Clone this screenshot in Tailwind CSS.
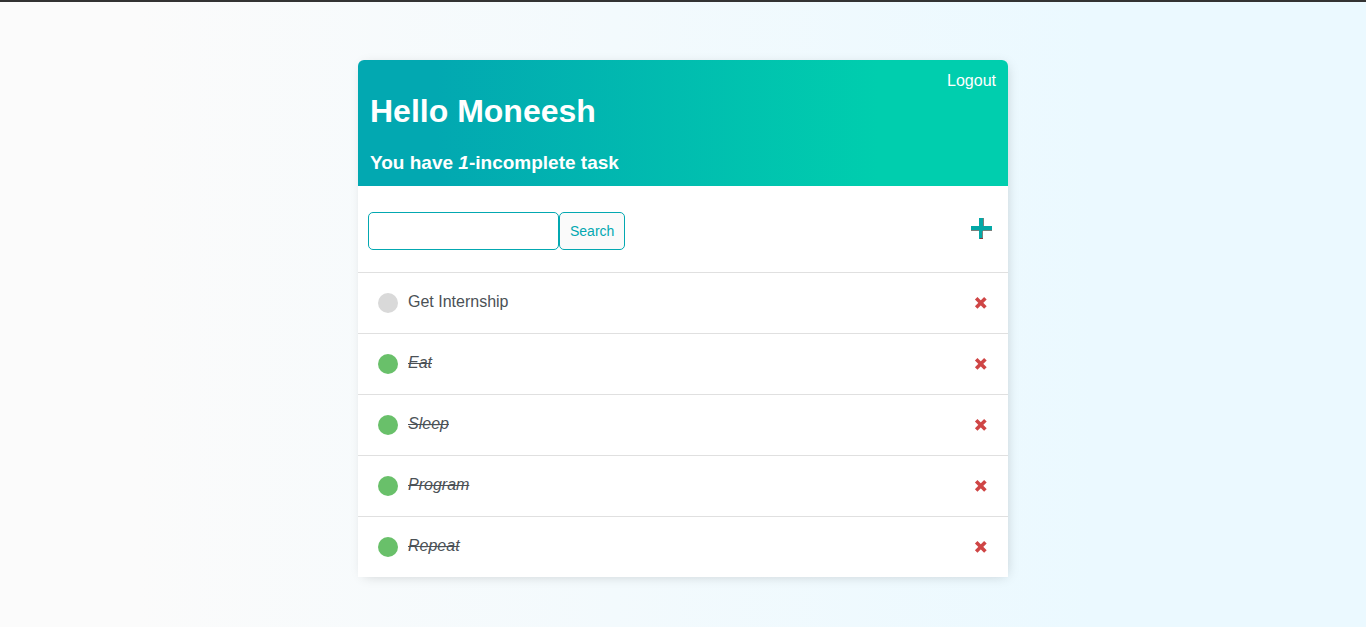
<!DOCTYPE html>
<html lang="en">
<head>
<meta charset="utf-8">
<meta name="viewport" content="width=device-width, initial-scale=1">
<title>My To Do List</title>
<script src="https://cdn.jsdelivr.net/npm/@tailwindcss/browser@4"></script>
</head>
<body class="min-h-screen border-t-2 border-[#333333] bg-[linear-gradient(90deg,#fbfbfb_10%,#ebf9ff_80%)] px-4 pt-[58px] pb-[50px] font-['Liberation_Sans',Arial,sans-serif] text-base leading-6 text-[#4b5156]">
<main class="mx-auto max-w-[650px] rounded-t-md bg-white shadow-[2px_2px_13px_-4px_rgba(0,0,0,0.21)]">
  <header class="flex justify-between rounded-t-md bg-[linear-gradient(90deg,#02a8b1_12%,#00ceae_80%)] px-3 pb-3 pt-[9px] text-white">
    <div class="pt-6">
      <h1 class="text-[32px] leading-9 font-bold">Hello Moneesh</h1>
      <h2 class="mt-[23px] text-[19px] leading-[22px] font-bold">You have <i>1</i>-incomplete task</h2>
    </div>
    <a href="#" class="self-start">Logout</a>
  </header>
  <div class="flex items-center justify-between px-[10px] pt-[26px] pb-[22px]">
    <form class="flex">
      <input type="text" aria-label="Search tasks" class="h-[38px] w-[191px] rounded-[5px] border border-[#03a8b1] bg-white px-2 text-sm outline-none">
      <button type="button" class="h-[38px] rounded-[5px] border border-[#03a8b1] bg-[#fafafa] px-[10px] text-sm text-[#03a8b1]">Search</button>
    </form>
    <a href="#" aria-label="Add task" class="mr-[5px] mb-1">
      <svg class="size-[22px]" viewBox="0 0 22 22" aria-hidden="true">
        <path d="M8 0H12V8H21V12H12V21H8V12H0V8H8Z" fill="#03a8a6"/>
        <path d="M12 0H13V8H12ZM12 12H21V13H12V21H11V13H12ZM0 12H8V13H0Z" fill="#7a817c"/>
        <path d="M9 20H12V21H9Z" fill="#8a3a3a"/>
      </svg>
    </a>
  </div>
  <ul>
    <li class="flex h-[61px] items-center border-t border-[#e0e0e0] px-5">
      <span class="size-5 rounded-full bg-[#d9d9d9]"></span>
      <a href="#" class="mb-0.5 ml-[10px]">Get Internship</a>
      <a href="#" aria-label="Delete Get Internship" class="ml-auto"><svg class="size-[14px]" viewBox="0 0 14 14" aria-hidden="true"><path d="M2.2 2.2L11.4 11.4M11.4 2.2L2.2 11.4" stroke="#cf4545" stroke-width="3.6" /></svg></a>
    </li>
    <li class="flex h-[61px] items-center border-t border-[#e0e0e0] px-5">
      <span class="size-5 rounded-full bg-[#69c06a]"></span>
      <a href="#" class="mb-0.5 ml-[10px] italic line-through">Eat</a>
      <a href="#" aria-label="Delete Eat" class="ml-auto"><svg class="size-[14px]" viewBox="0 0 14 14" aria-hidden="true"><path d="M2.2 2.2L11.4 11.4M11.4 2.2L2.2 11.4" stroke="#cf4545" stroke-width="3.6" /></svg></a>
    </li>
    <li class="flex h-[61px] items-center border-t border-[#e0e0e0] px-5">
      <span class="size-5 rounded-full bg-[#69c06a]"></span>
      <a href="#" class="mb-0.5 ml-[10px] italic line-through">Sleep</a>
      <a href="#" aria-label="Delete Sleep" class="ml-auto"><svg class="size-[14px]" viewBox="0 0 14 14" aria-hidden="true"><path d="M2.2 2.2L11.4 11.4M11.4 2.2L2.2 11.4" stroke="#cf4545" stroke-width="3.6" /></svg></a>
    </li>
    <li class="flex h-[61px] items-center border-t border-[#e0e0e0] px-5">
      <span class="size-5 rounded-full bg-[#69c06a]"></span>
      <a href="#" class="mb-0.5 ml-[10px] italic line-through">Program</a>
      <a href="#" aria-label="Delete Program" class="ml-auto"><svg class="size-[14px]" viewBox="0 0 14 14" aria-hidden="true"><path d="M2.2 2.2L11.4 11.4M11.4 2.2L2.2 11.4" stroke="#cf4545" stroke-width="3.6" /></svg></a>
    </li>
    <li class="flex h-[61px] items-center border-t border-[#e0e0e0] px-5">
      <span class="size-5 rounded-full bg-[#69c06a]"></span>
      <a href="#" class="mb-0.5 ml-[10px] italic line-through">Repeat</a>
      <a href="#" aria-label="Delete Repeat" class="ml-auto"><svg class="size-[14px]" viewBox="0 0 14 14" aria-hidden="true"><path d="M2.2 2.2L11.4 11.4M11.4 2.2L2.2 11.4" stroke="#cf4545" stroke-width="3.6" /></svg></a>
    </li>
  </ul>
</main>
</body>
</html>
